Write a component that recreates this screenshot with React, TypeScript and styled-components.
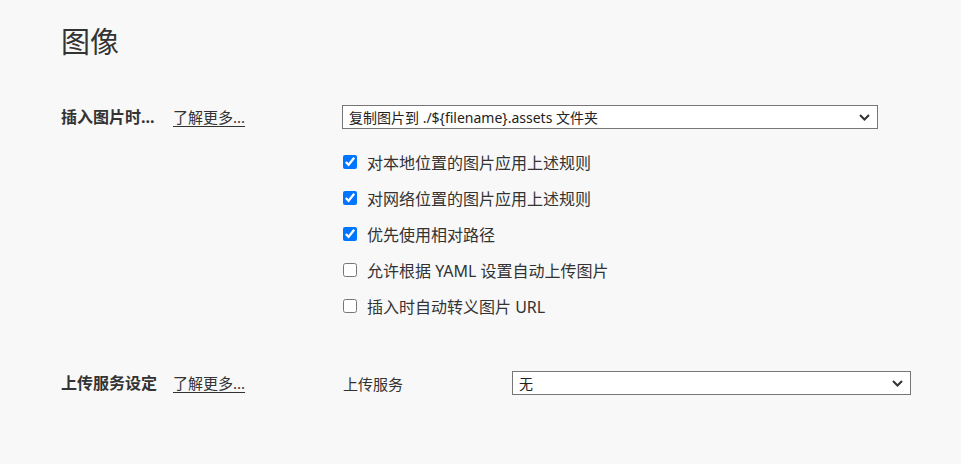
import React from "react";
import styled, { createGlobalStyle } from "styled-components";

const GlobalStyle = createGlobalStyle`
  html, body {
    margin: 0;
    padding: 0;
    background: #f8f8f8;
  }
  body {
    font-family: "Noto Sans", "Noto Sans CJK SC", sans-serif;
    color: #333;
  }
`;

const Page = styled.div`
  width: 961px;
  height: 464px;
  box-sizing: border-box;
  padding: 24px 52px 0 61px;
  background: #f8f8f8;
`;

const Title = styled.h1`
  margin: 0;
  font-size: 29px;
  line-height: 36px;
  font-weight: 400;
  color: #333;
`;

const Section = styled.section<{ $top: number }>`
  display: grid;
  grid-template-columns: 281px 1fr;
  align-items: start;
  margin-top: ${(p) => p.$top}px;
`;

const LabelCell = styled.div`
  display: flex;
  align-items: center;
  gap: 15px;
  height: 22px;
`;

const SectionLabel = styled.span`
  font-size: 16px;
  font-weight: 700;
  color: #333;
  width: 97px;
  white-space: nowrap;
`;

const LearnMore = styled.a`
  font-size: 15px;
  color: #333;
  text-decoration: underline;
  text-underline-offset: 3px;
  white-space: nowrap;
  cursor: pointer;
`;

const Controls = styled.div`
  display: flex;
  flex-direction: column;
`;

const SelectBox = styled.div<{ $width: number }>`
  width: ${(p) => p.$width}px;
  height: 24px;
  box-sizing: border-box;
  border: 1px solid #767676;
  background: #fff;
  display: flex;
  align-items: center;
  justify-content: space-between;
  padding: 0 7px 0 6px;
  font-size: 14px;
  color: #222;
  white-space: nowrap;
`;

const Chevron = styled.svg`
  width: 11px;
  height: 7px;
  flex: none;
`;

const CheckList = styled.div`
  display: flex;
  flex-direction: column;
  margin-top: 15px;
`;

const CheckRow = styled.label`
  display: flex;
  align-items: center;
  gap: 10px;
  height: 36px;
  font-size: 16px;
  color: #333;
  white-space: nowrap;
`;

const Check = styled.input`
  margin: 0 0 0 1px;
  width: 14px;
  height: 14px;
  accent-color: #0075ff;
`;

const InlineRow = styled.div`
  display: flex;
  align-items: center;
  height: 24px;
`;

const FieldLabel = styled.span`
  width: 169px;
  font-size: 15px;
  color: #333;
  padding-left: 1px;
`;

const ChevronIcon = () => (
  <Chevron viewBox="0 0 11 7">
    <path d="M1 1 L5.5 5.5 L10 1" fill="none" stroke="#333" strokeWidth="2" />
  </Chevron>
);

const Select = ({ value, width }: { value: string; width: number }) => (
  <SelectBox $width={width}>
    <span>{value}</span>
    <ChevronIcon />
  </SelectBox>
);

const options: { label: string; checked: boolean }[] = [
  { label: "对本地位置的图片应用上述规则", checked: true },
  { label: "对网络位置的图片应用上述规则", checked: true },
  { label: "优先使用相对路径", checked: true },
  { label: "允许根据 YAML 设置自动上传图片", checked: false },
  { label: "插入时自动转义图片 URL", checked: false },
];

export default function App() {
  return (
    <>
      <GlobalStyle />
      <Page>
        <Title>图像</Title>
        <Section $top={45}>
          <LabelCell>
            <SectionLabel>插入图片时...</SectionLabel>
            <LearnMore>了解更多...</LearnMore>
          </LabelCell>
          <Controls>
            <Select value="复制图片到 ./${filename}.assets 文件夹" width={536} />
            <CheckList>
              {options.map((o) => (
                <CheckRow key={o.label}>
                  <Check type="checkbox" defaultChecked={o.checked} />
                  {o.label}
                </CheckRow>
              ))}
            </CheckList>
          </Controls>
        </Section>
        <Section $top={47}>
          <LabelCell>
            <SectionLabel>上传服务设定</SectionLabel>
            <LearnMore>了解更多...</LearnMore>
          </LabelCell>
          <InlineRow>
            <FieldLabel>上传服务</FieldLabel>
            <Select value="无" width={399} />
          </InlineRow>
        </Section>
      </Page>
    </>
  );
}
